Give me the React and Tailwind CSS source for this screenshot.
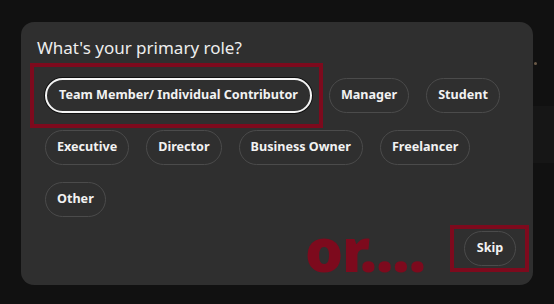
import React from "react";

const roles = [
  "Team Member/ Individual Contributor",
  "Manager",
  "Student",
  "Executive",
  "Director",
  "Business Owner",
  "Freelancer",
  "Other",
];

function Pill({ label, selected }) {
  return (
    <button
      className={
        "h-[35px] rounded-full flex items-center text-[12.6px] font-bold text-[#f2f2f2] bg-[#2f2f2f] " +
        (selected
          ? "px-[12px] border-2 border-[#f5f5f5] shadow-[0_0_0_1px_#111]"
          : "px-[11px] border border-[#4b4b4b]")
      }
      style={{ fontFamily: '"Noto Sans", "Open Sans", sans-serif' }}
    >
      {label}
    </button>
  );
}

export default function App() {
  return (
    <div
      className="relative w-[554px] h-[304px] bg-[#111111] overflow-hidden pl-[21px] pt-[22px]"
      style={{ fontFamily: '"Noto Sans", "Open Sans", sans-serif' }}
    >
      {/* background page hints behind the dialog */}
      <div className="absolute left-[533px] right-0 top-[106px] h-[57px] bg-[#161616]" />
      <div className="absolute left-[534px] top-[62px] w-[3px] h-[3px] rounded-full bg-[#6b5a48]" />

      <div className="relative w-[512px] h-[263px] rounded-[13px] bg-[#2f2f2f] flex flex-col pt-[14px] pb-[16px]">
        <h2 className="pl-[16px] text-[17px] leading-[24px] text-[#ededed] font-normal">
          What's your primary role?
        </h2>
        <div className="mt-[18px] pl-[24px] pr-[24px] flex flex-wrap gap-x-[17px] gap-y-[17px]">
          {roles.map((r, i) => (
            <Pill key={r} label={r} selected={i === 0} />
          ))}
        </div>
        <div className="mt-auto flex justify-end items-center pr-[17px]">
          <div className="text-[60px] leading-[40px] font-black text-[#7d0a1d] tracking-[-1px] mr-[39px] pt-[2px]">
            or....
          </div>
          <div className="relative">
            <button className="h-[35px] w-[52px] rounded-full border border-[#4b4b4b] flex items-center justify-center text-[12.6px] font-bold text-[#f2f2f2]">
              Skip
            </button>
            <div className="absolute left-[-14px] top-[-6px] w-[79px] h-[47px] border-[4px] border-[#7d0a1d]" />
          </div>
        </div>

        {/* annotation around the selected role */}
        <div className="absolute left-[9px] top-[41px] w-[293px] h-[65px] border-[4px] border-[#7d0a1d]" />
      </div>
    </div>
  );
}
